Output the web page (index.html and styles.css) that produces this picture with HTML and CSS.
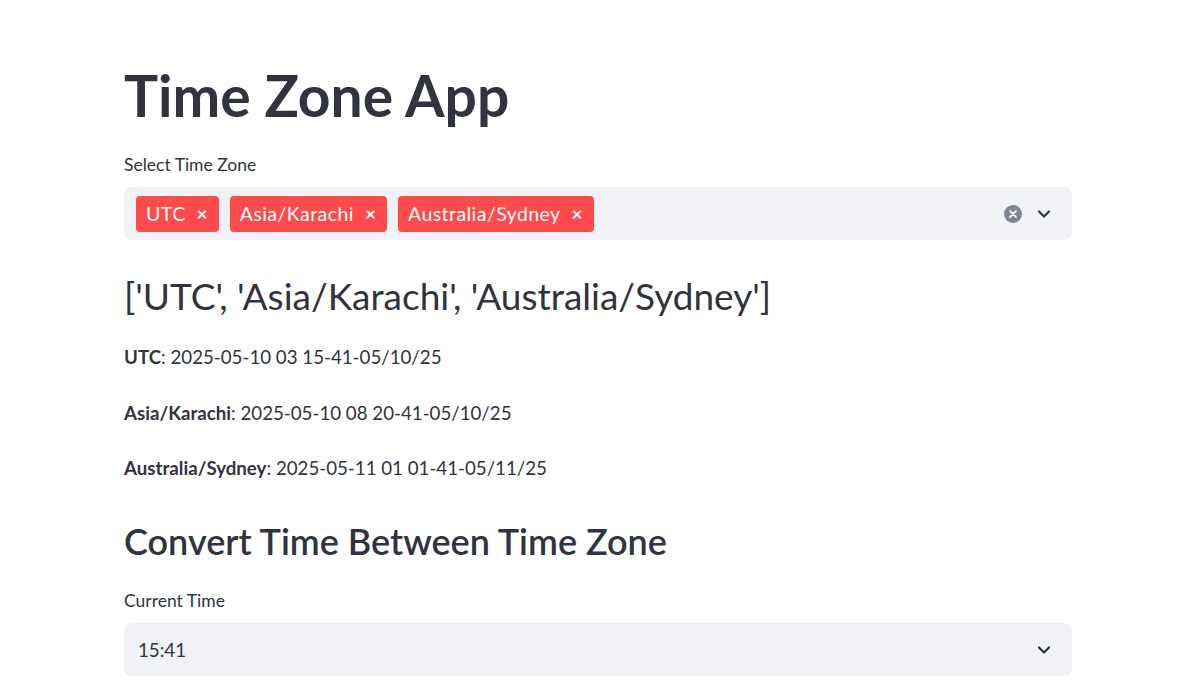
FILE: index.html
```html
<!DOCTYPE html>
<html lang="en">
<head>
<meta charset="utf-8">
<title>Time Zone App</title>
<link rel="stylesheet" href="styles.css">
</head>
<body>
<main class="app">
  <div class="block">
    <h1 class="title">Time Zone App</h1>

    <div class="field">
      <label class="field-label">Select Time Zone</label>
      <div class="multiselect">
        <div class="tags">
          <span class="tag">UTC <span class="tag-x">×</span></span>
          <span class="tag">Asia/Karachi <span class="tag-x">×</span></span>
          <span class="tag">Australia/Sydney <span class="tag-x">×</span></span>
        </div>
        <div class="controls">
          <svg class="clear" width="18" height="18" viewBox="0 0 18 18"><circle cx="9" cy="9" r="9" fill="#808495"/><path d="M6 6 L12 12 M12 6 L6 12" stroke="#f0f2f6" stroke-width="1.8" stroke-linecap="round"/></svg>
          <svg class="chev" width="16" height="16" viewBox="0 0 16 16"><path d="M3 5.5 L8 10.5 L13 5.5" fill="none" stroke="#31333f" stroke-width="2.2" stroke-linecap="round" stroke-linejoin="round"/></svg>
        </div>
      </div>
    </div>

    <h3 class="subhead list-head">['UTC', 'Asia/Karachi', 'Australia/Sydney']</h3>

    <p class="line"><strong>UTC</strong>: 2025-05-10 03 15-41-05/10/25</p>
    <p class="line"><strong>Asia/Karachi</strong>: 2025-05-10 08 20-41-05/10/25</p>
    <p class="line"><strong>Australia/Sydney</strong>: 2025-05-11 01 01-41-05/11/25</p>

    <h3 class="subhead convert-head">Convert Time Between Time Zone</h3>

    <div class="field">
      <label class="field-label">Current Time</label>
      <div class="select">
        <span class="select-value">15:41</span>
        <svg class="chev" width="16" height="16" viewBox="0 0 16 16"><path d="M3 5.5 L8 10.5 L13 5.5" fill="none" stroke="#31333f" stroke-width="2.2" stroke-linecap="round" stroke-linejoin="round"/></svg>
      </div>
    </div>
  </div>
</main>
</body>
</html>
```
FILE: styles.css
```css
* { box-sizing: border-box; }
html, body { margin: 0; padding: 0; background: #ffffff; }
body {
  font-family: "Lato", "Noto Sans", sans-serif;
  color: #31333f;
  overflow: hidden;
}
.app { padding: 0 0 0 124px; }
.block { width: 948px; padding-top: 63px; }

.title {
  margin: 0;
  font-size: 57px;
  font-weight: 700;
  line-height: 64px;
  letter-spacing: 0;
}

.field { display: flex; flex-direction: column; }
.field-label {
  font-size: 17.5px;
  line-height: 20px;
  margin: 28px 0 12px;
}

.multiselect {
  background: #f0f2f6;
  border-radius: 8px;
  height: 53px;
  display: flex;
  align-items: center;
  justify-content: space-between;
  padding: 0 20px 0 12px;
}
.tags { display: flex; gap: 11px; }
.tag {
  background: #ff4b4b;
  color: #fff;
  border-radius: 4px;
  height: 36px;
  padding: 0 11px 0 10px;
  display: inline-flex;
  align-items: center;
  font-size: 19.5px;
  letter-spacing: 0.45px;
  gap: 11px;
}
.tag-x { font-size: 19px; font-weight: 700; letter-spacing: 0; }
.controls { display: flex; align-items: center; gap: 14px; }

.subhead {
  margin: 0;
  font-size: 36px;
  font-weight: 600;
  line-height: 44px;
}
.list-head { font-weight: 400; font-size: 37px; margin-top: 34px; }
.line {
  margin: 0;
  font-size: 18.7px;
  line-height: 28px;
  margin-top: 27.5px;
}
.line:first-of-type { margin-top: 25px; }
.line strong { font-weight: 700; }
.convert-head { margin-top: 37px; }

.select {
  background: #f0f2f6;
  border-radius: 8px;
  height: 53px;
  display: flex;
  align-items: center;
  justify-content: space-between;
  padding: 0 20px 0 14px;
  font-size: 18.7px;
}
```
